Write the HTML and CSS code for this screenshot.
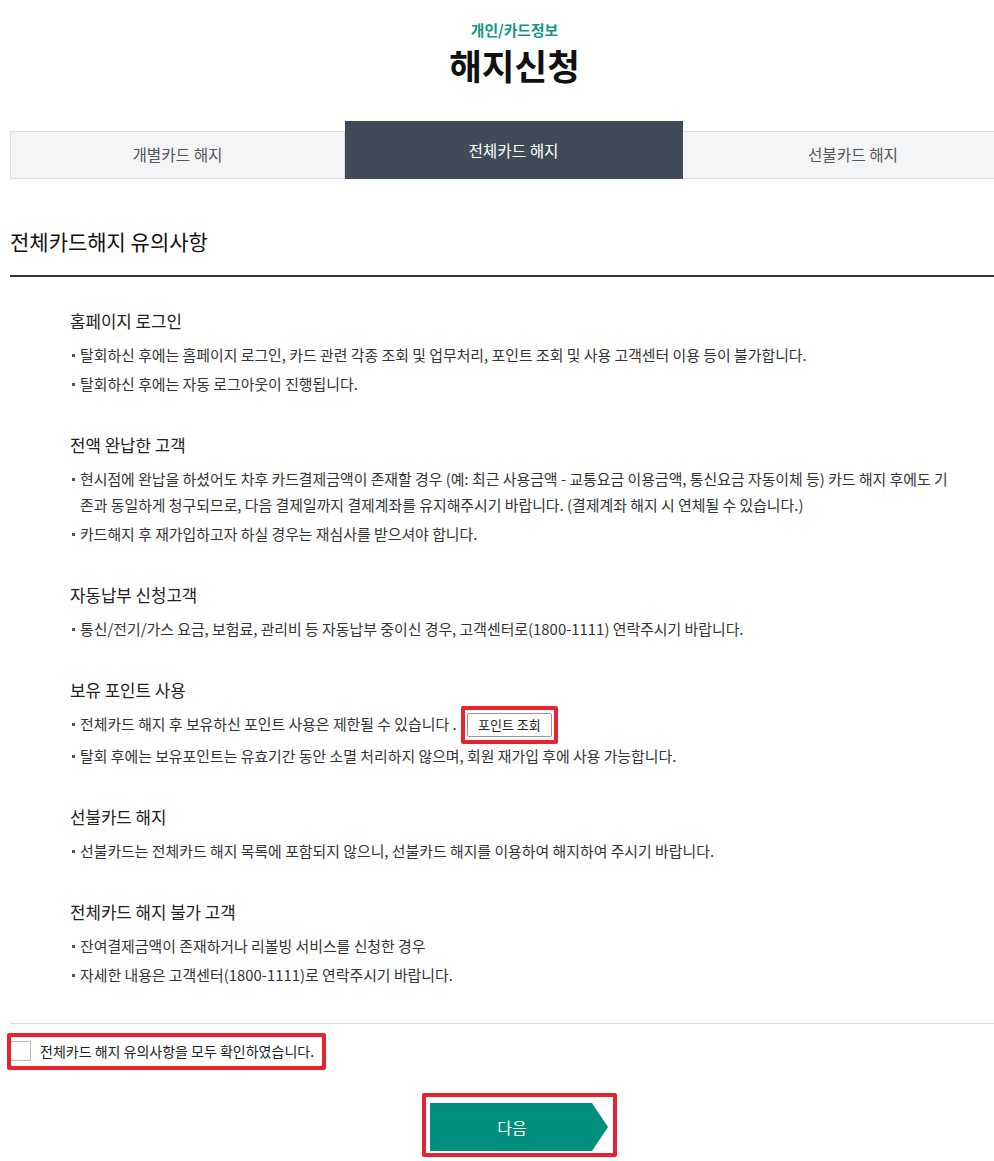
FILE: index.html
```html
<!DOCTYPE HTML>
<html>
<head>
	<meta http-equiv="Content-Type" content="text/html; charset=utf-8">
	<title>해지신청</title>
	<link rel="stylesheet" href="styles.css">
</head>
<body>
<div class="page">
	<div class="head">
		<div class="head-sub">개인/카드정보</div>
		<h1 class="head-title">해지신청</h1>
	</div>

	<ul class="tabs">
		<li class="tab">개별카드 해지</li>
		<li class="tab on">전체카드 해지</li>
		<li class="tab">선불카드 해지</li>
	</ul>

	<h2 class="sec-title">전체카드해지 유의사항</h2>

	<div class="notice">
		<div class="group">
			<h3>홈페이지 로그인</h3>
			<ul class="dots">
				<li>탈회하신 후에는 홈페이지 로그인, 카드 관련 각종 조회 및 업무처리, 포인트 조회 및 사용 고객센터 이용 등이 불가합니다.</li>
				<li>탈회하신 후에는 자동 로그아웃이 진행됩니다.</li>
			</ul>
		</div>
		<div class="group">
			<h3>전액 완납한 고객</h3>
			<ul class="dots">
				<li>현시점에 완납을 하셨어도 차후 카드결제금액이 존재할 경우 (예: 최근 사용금액 - 교통요금 이용금액, 통신요금 자동이체 등) 카드 해지 후에도 기존과 동일하게 청구되므로, 다음 결제일까지 결제계좌를 유지해주시기 바랍니다. (결제계좌 해지 시 연체될 수 있습니다.)</li>
				<li>카드해지 후 재가입하고자 하실 경우는 재심사를 받으셔야 합니다.</li>
			</ul>
		</div>
		<div class="group">
			<h3>자동납부 신청고객</h3>
			<ul class="dots">
				<li>통신/전기/가스 요금, 보험료, 관리비 등 자동납부 중이신 경우, 고객센터로(1800-1111) 연락주시기 바랍니다.</li>
			</ul>
		</div>
		<div class="group">
			<h3>보유 포인트 사용</h3>
			<ul class="dots">
				<li>전체카드 해지 후 보유하신 포인트 사용은 제한될 수 있습니다 . <span class="mark mark-sm"><button class="btn-sm" type="button">포인트 조회</button></span></li>
				<li>탈회 후에는 보유포인트는 유효기간 동안 소멸 처리하지 않으며, 회원 재가입 후에 사용 가능합니다.</li>
			</ul>
		</div>
		<div class="group">
			<h3>선불카드 해지</h3>
			<ul class="dots">
				<li>선불카드는 전체카드 해지 목록에 포함되지 않으니, 선불카드 해지를 이용하여 해지하여 주시기 바랍니다.</li>
			</ul>
		</div>
		<div class="group">
			<h3>전체카드 해지 불가 고객</h3>
			<ul class="dots">
				<li>잔여결제금액이 존재하거나 리볼빙 서비스를 신청한 경우</li>
				<li>자세한 내용은 고객센터(1800-1111)로 연락주시기 바랍니다.</li>
			</ul>
		</div>
	</div>

	<div class="agree">
		<label class="mark agree-box">
			<span class="chk"></span>
			<span>전체카드 해지 유의사항을 모두 확인하였습니다.</span>
		</label>
	</div>

	<div class="btns">
		<span class="mark mark-lg"><button class="btn-next" type="button">다음</button></span>
	</div>
</div>
</body>
</html>
```

FILE: styles.css
```css
*{
	margin: 0;
	padding: 0;
	box-sizing: border-box;
}
html, body{
	overflow-x: hidden;
}
body{
	font-family: "Noto Sans CJK KR", "Noto Sans", sans-serif;
	color: #333;
	background: #fff;
}
ul{
	list-style: none;
}
.page{
	width: 1014px;
	margin-left: 10px;
}

/* header */
.head{
	text-align: center;
	padding-top: 19px;
	padding-right: 5px;
}
.head-sub{
	font-size: 14.8px;
	line-height: 22px;
	font-weight: bold;
	color: #0e9783;
}
.head-title{
	font-size: 35.5px;
	line-height: 46px;
	font-weight: bold;
	color: #111;
	margin-top: 1px;
}

/* tabs */
.tabs{
	display: grid;
	grid-template-columns: 335px 338px 1fr;
	align-items: end;
	margin-top: 33px;
	height: 58px;
}
.tab{
	height: 48px;
	line-height: 46px;
	text-align: center;
	font-size: 15.7px;
	color: #555;
	background: #f4f5f7;
	border: 1px solid #dcdde0;
	border-left: 0;
}
.tab:first-child{
	border-left: 1px solid #dcdde0;
}
.tab.on{
	height: 58px;
	line-height: 58px;
	color: #fff;
	background: #414b57;
	border-color: #414b57;
}

.sec-title{
	width: 984px;
	font-size: 21px;
	line-height: 28px;
	font-weight: normal;
	color: #111;
	margin-top: 48px;
	padding-bottom: 20px;
	border-bottom: 2px solid #333;
}

/* notice list */
.notice{
	width: 984px;
	padding: 32px 40px 35px 60px;
	border-bottom: 1px solid #ddd;
}
.group + .group{
	margin-top: 36px;
}
.group h3{
	font-size: 16.8px;
	line-height: 24px;
	font-weight: normal;
	color: #222;
}
.dots{
	margin-top: 9px;
}
.dots li{
	position: relative;
	padding-left: 10px;
	font-size: 14.9px;
	line-height: 26px;
	color: #333;
}
.dots li + li{
	margin-top: 3px;
}
.dots li::before{
	content: "";
	position: absolute;
	left: 2px;
	top: 12px;
	width: 3px;
	height: 3px;
	background: #555;
}

/* red marks */
.mark{
	display: inline-block;
	border: 4px solid #e8222e;
	border-radius: 2px;
}
.mark-sm{
	padding: 3px 2px;
	margin-left: 1px;
	vertical-align: middle;
	margin-top: -6px;
	margin-bottom: -4px;
}
.btn-sm{
	display: block;
	height: 24px;
	padding: 0 10px;
	font-family: inherit;
	font-size: 13px;
	color: #222;
	background: #fff;
	border: 1px solid #999;
	border-radius: 2px;
}

/* agree */
.agree{
	padding-top: 9px;
}
.agree-box{
	display: inline-flex;
	align-items: center;
	gap: 9px;
	height: 37px;
	margin-left: -3px;
	padding-right: 8px;
	font-size: 14px;
	color: #222;
}
.chk{
	width: 20px;
	height: 20px;
	border: 1px solid #bbb;
	border-left: 0;
	background: #fff;
}

/* next button */
.btns{
	width: 984px;
	text-align: center;
	padding-top: 23px;
	padding-left: 35px;
}
.mark-lg{
	padding: 6px 5px 2px 4px;
}
.btn-next{
	display: block;
	width: 178px;
	height: 48px;
	padding-right: 14px;
	font-family: inherit;
	font-size: 16px;
	color: #fff;
	background: #008f7c;
	border: 0;
	clip-path: polygon(0 0, 91% 0, 100% 50%, 91% 100%, 0 100%);
}
```
